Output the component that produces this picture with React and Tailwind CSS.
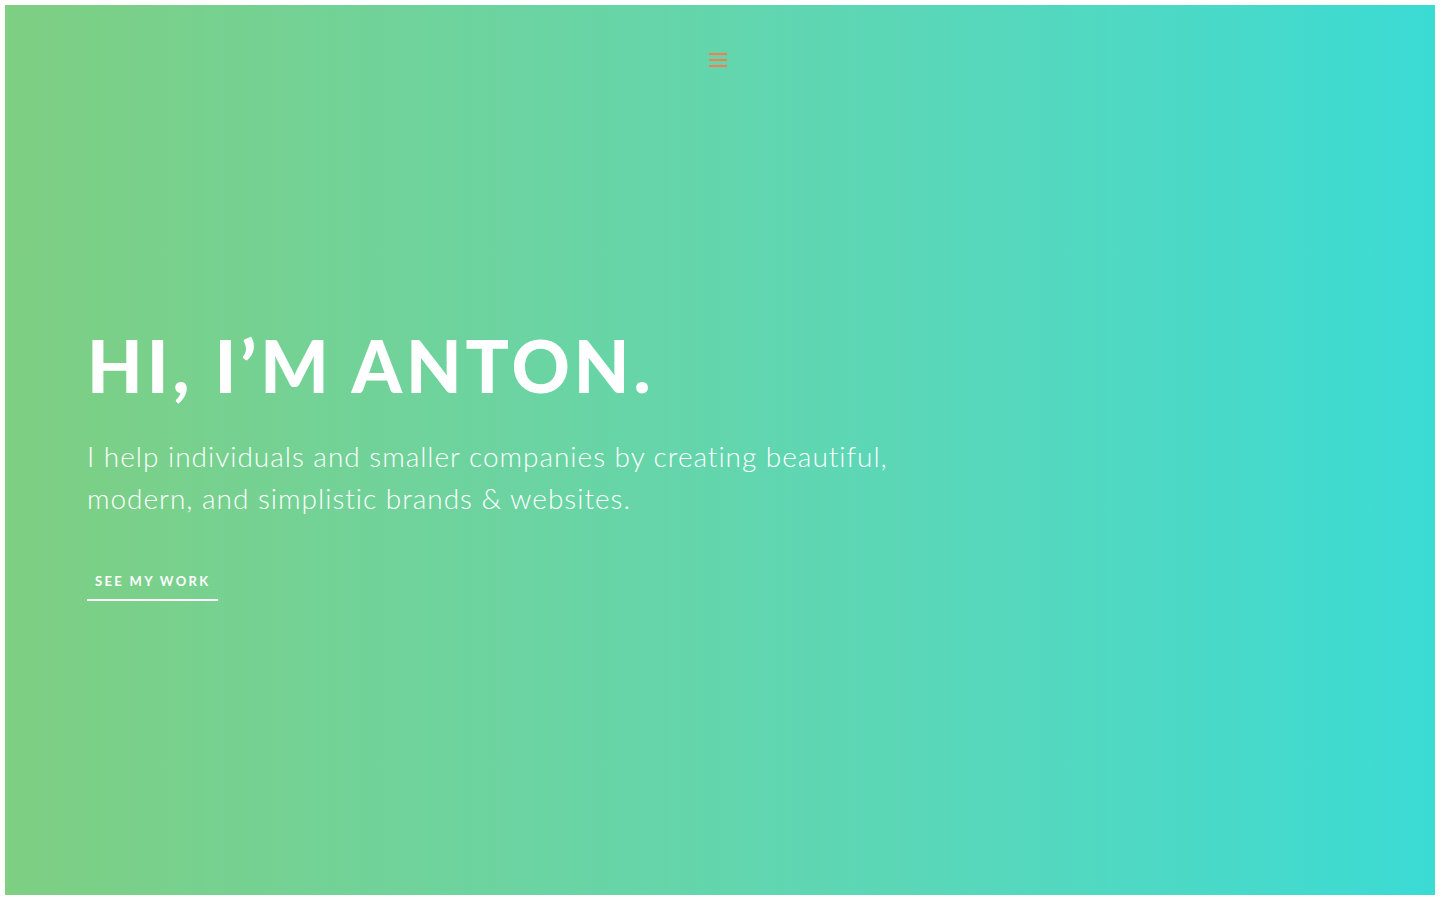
import React from "react";

function MenuIcon() {
  return (
    <button className="flex flex-col gap-[4px] w-[18px]" aria-label="Menu">
      <span className="block h-[2px] w-full bg-[#ff7b4f]" />
      <span className="block h-[2px] w-full bg-[#ff7b4f]" />
      <span className="block h-[2px] w-full bg-[#ff7b4f]" />
    </button>
  );
}

export default function App() {
  return (
    <div className="bg-white p-[5px] min-h-[900px]">
      <div className="h-[890px] bg-gradient-to-r from-[#7ecf82] to-[#3adbd4] flex flex-col">
        <header className="flex justify-center pt-[48px] pr-[4px]">
          <MenuIcon />
        </header>

        <main className="pl-[82px] pt-[262px]">
          <h1
            className="text-white text-[72px] leading-none font-black tracking-[0.055em]"
            style={{ fontFamily: "Lato, 'Liberation Sans', sans-serif" }}
          >
            HI, I&rsquo;M ANTON.
          </h1>
          <p
            className="mt-[34px] text-white text-[28px] leading-[42px] font-light tracking-[0.035em] max-w-[880px]"
            style={{ fontFamily: "Lato, 'Liberation Sans', sans-serif" }}
          >
            I help individuals and smaller companies by creating beautiful,
            modern, and simplistic brands &amp; websites.
          </p>
          <a
            href="#work"
            className="inline-block mt-[53px] px-[8px] pb-[7px] border-b-2 border-white text-white text-[13px] font-bold tracking-[0.18em]"
            style={{ fontFamily: "Lato, 'Liberation Sans', sans-serif" }}
          >
            SEE MY WORK
          </a>
        </main>
      </div>
    </div>
  );
}
